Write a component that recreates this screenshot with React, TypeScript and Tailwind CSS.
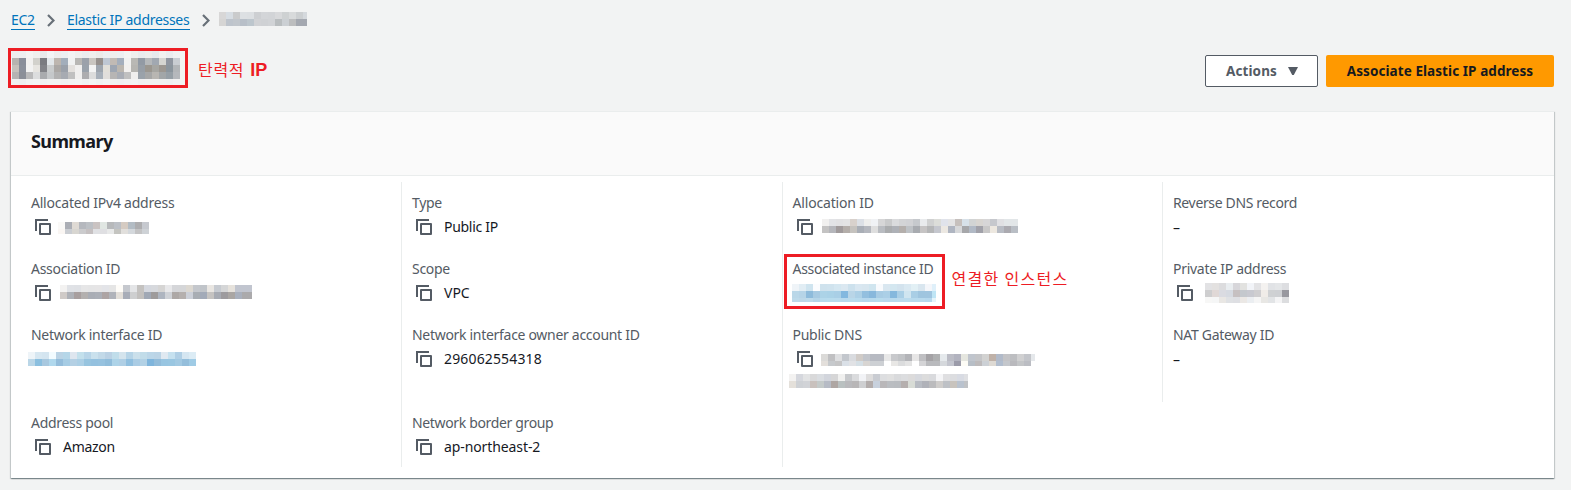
import type { ReactNode } from "react";

const FONT = "font-['Noto_Sans','Noto_Sans_CJK_KR',sans-serif]";

type MosaicProps = { rows: string[]; className?: string };

/* Redacted value: rows of 7px tiles, one hex colour per tile. */
function Mosaic({ rows, className = "" }: MosaicProps) {
  return (
    <span className={`flex flex-col overflow-hidden ${className}`}>
      {rows.map((row, y) => (
        <span key={y} className="flex h-[7px] shrink-0">
          {row.split(" ").map((c, x) => (
            <span key={x} className="h-[7px] w-[7px] shrink-0" style={{ backgroundColor: `#${c}` }} />
          ))}
        </span>
      ))}
    </span>
  );
}

function CopyIcon() {
  return (
    <svg className="ml-1 h-4 w-4 shrink-0" viewBox="0 0 16 16" fill="none" stroke="#545b64" strokeWidth="2">
      <path d="M1 12V1H13" />
      <rect x="5" y="5" width="10" height="10" strokeLinejoin="round" />
    </svg>
  );
}

function Chevron() {
  return (
    <svg className="h-[13px] w-2 shrink-0" viewBox="0 0 8 13" fill="none" stroke="#687078" strokeWidth="2.2">
      <path d="M1 1l5.5 5.5L1 12" />
    </svg>
  );
}

type FieldProps = { label: string; track: string; copy?: boolean; tall?: boolean; children: ReactNode };

function Field({ label, track, copy, tall, children }: FieldProps) {
  return (
    <div className={`relative flex shrink-0 flex-col ${tall ? "h-[88px]" : "h-[66px]"}`}>
      <div className={`h-[22px] whitespace-nowrap leading-[22px] text-[#545b64] ${track}`}>{label}</div>
      <div className="mt-0.5 flex h-[22px] items-center whitespace-nowrap leading-[22px] text-[#16191f]">
        {copy && <CopyIcon />}
        {children}
      </div>
    </div>
  );
}

const TITLE = [
  "eeeeee eeeff0 f4f4f3 f0f0ee e9eaeb f3f4f5 eeeded edeff1 f3f3f3 efefee ebecee efeeed ebeae9 eceef1 efeeed edeff1 f4f4f3 efefee e9ebed ededec e7eaed f1f1ef eaecee f1f1f1",
  "b7b3af 898e9a f2f1f0 d2d1cc 7a7b80 e2e7ea bdb6af a3aebb f1f2f2 b8b7b4 9ba1aa c9c5c0 96908d bfc7d3 c1bab4 a4aebc f1f1f0 b9b8b4 929aa4 b5b8ba a1a8b1 d5d5d1 9096a0 c9cdd2",
  "c6c1bb 8b909b f2f2f2 e7e5e1 828388 c9cccd aba8a5 9ba1aa e3e0dd f0efee 9aa2ab f3f3f3 9ea5ae e2dfd9 9ea6b2 bbb6af f2f0ee b6b5b1 979ea6 9b9790 a6a6a2 9c9791 8b959d b2b5b8",
  "b6b3b2 8b8f98 bababb dcddde a9abae c5c8ca b2b2b2 a7abb2 c0c0c0 f0efee adadaf dcdcdc a8b0ba e1dedb b7b5b4 a9adb5 c0c0c0 f0efee 9aa2aa a6a7a7 b8b6b2 a2a6a8 969fa6 b5b8bc",
  "f0f0f0 eeeeef f2f2f2 f3f3f3 f0f0f1 f2f2f2 f2f2f2 f0f1f1 f2f2f2 f3f3f3 f0f0f1 f3f3f3 f0f1f1 f3f3f3 f1f1f1 f0f0f1 f2f2f2 f3f3f3 f0f0f1 f1f1f1 f1f1f1 f0f1f1 eff0f1 f2f2f2",
];
const CRUMB = [
  "d8d7d7 d7dde3 cacbcc dde0e3 dcdfe2 cdcfd2 d3d5d8 d2d4d7 d8d9db ced1d2 d8dadb cccfd1 d5d9dd",
  "d6d5d4 bec4cc c1c6cc b8bfc8 bdc6cd d1d2d5 cfd1d4 d1d3d6 b9bdbf cbcfd3 bcbdbe a4a8b0 a4a8b0",
];
const IPV4 = [
  "faf9f7 abaeb5 dfdad4 b5b8be bcc0c5 cac3c2 e0e6e2 b7b9bb bcc0c6 d5cbc2 b3bcc4 adadaf c6c9cf",
  "faf6f3 cacdd2 d8d6d1 cbcbcd c5c0c1 e0e1e4 dfdfe2 e8e9e9 c4c4c0 e1dfdc d4d8dc c3c3c4 ced2d6",
];
const ASSOCIATION = [
  "f3f2f1 e0e2e6 dfe1e5 e6e6e7 e5e5e6 e6e5e6 e3e4e8 e5e5e5 fefcf8 c5c8ce e4e5e7 c4c2c0 d5d8df d7d9dd d6d5d4 e8e8ea d5d6d9 d5d6d8 dcd8d1 c4c7cc c0c4c9 e9e6e2 c7cbd1 d5d6d7 e6e2dc c1c5cf c1c5cf c1c5cf",
  "cfcac7 aeb1b7 a89f9f b3b0af a9adb5 abafb7 ada4a4 b0b3ba e3dfd9 a8adb8 cecfd0 c2c0be a0a8b5 9e9b9b aeb5c0 cfd2d7 ada8a6 b5b0ae ccd0d8 a8adb3 a2aab8 c5c3c1 a7abb3 9d9b9e aaa6a3 a9b0bd abaaac abaaac",
];
const INTERFACE = [
  "eef4f8 d7e7f1 d4e5f0 f2fbff bad3e5 b5d6e8 dee6ef c3e0ec b8d5e8 cae1ed c2d9e8 bad1e4 c0ddea d4e4ed b6d4e7 cbe0eb c1dce9 bbd6e8 bbd4e6 e0e9f1 c6e1ef b0cfe5 d5e6f1 dcecf5",
  "bad6e7 8bbfdf a8c8df b0d8ed 94bddb a6cce4 b4d0e4 accfe5 97c4df 94c1df 96c2df 90bddb add3e8 afcfe5 90bfdf aacce4 b2d1e5 7fb5dc 92bcda 98c5e1 99c6e1 a2c9e2 94bedb 9fcbe5",
];
const ALLOCATION = [
  "f1f0ef e2e3e6 e1e1e3 e3e3e4 d8d1cc dce0e6 eeeeed f0f2f5 d6d6d7 c9cacb dadbdd d3d4d6 d1d2d5 c6c9cd e9ebed d0d1d1 dcddd9 e0e3eb e4e4e5 c6c0bd d7e1e9 d2d4d4 d8d5d1 d7d6d7 c6c8cd e0e0e3 e2e6e8 e2e6e8",
  "c4c3c3 b5b6bb a09a9b b4aeaa c5c2be a9aeb6 b5b8bf dedede b9bcc1 aaacae aeb1b7 b4afac bec2c6 a8abb0 c6c4c4 b5b6b7 c5c7ce ece8e2 afb5c1 d7d8da a6a7aa b1b9c5 a1a1a9 c9c8c8 ede8e0 b8bcc4 abaab0 b9bec5",
];
const INSTANCE = [
  "eff4f8 e1edf4 cfe4ef fbfcfe cfe2ed d0e3ee d5e7f1 dbe8f1 cde1ed d9e7f1 d8e6ef d0e5ef f8fafd d9e7f0 d4e7f0 d3e3ee dae9f2 e2f0f5 d9e6ef f4f6fa dff0fa",
  "bad7e8 b6d4e7 8ebbdb a7cae2 acd3e7 aad2e7 a9cfe6 83b8df b9d5e7 add0e6 93bfdf 88b8dc a8cce4 abcfe6 85b8dd aacfe6 d0e5f0 a9cee5 9fc5df a0c5df bfe5f5",
  "bddaea bdd8e8 bddaea b5d5e8 b7dbed b8dced b9dbed b8d9ed b9dbed b7daed b6d7ed b7daed b8dced b9d8ed b8daed bbdaed bbdbed b8daed b9daed b6d8ed e5f4fa",
];
const DNS_ONE = [
  "dbdad8 c0c0c2 dedfe1 c3c7cd d9dbdf d0cbc7 c2c5cb b7bac2 b7bac2 e8e8e8 c8c9cc c1c3c6 b3b4b8 e7e6e6 bfbfc2 a4a2a5 afb0b1 e5e9ec bbbcc5 b2b3bf e5e6df c0c5cd c4c5c8 d2d2d1 bfb1a8 b1bac9 c3c3c6 bdbec1 d0d0d1 c3c5ca e5e8eb",
  "e3dfdb c6c9cc c5c5c6 dae0e7 e1e2e5 d5dfe5 d8d5d2 cdd0d4 cdd0d4 ffffff e8e7e5 dbdcdd e4e4e4 ffffff d4d4d6 b9babd b9babd d5d8dc c3c5ce 9b9ba9 fdfcf6 b7bec6 bdbabb ccd0d5 ddd9d3 b1bdce c4c7cc b9b9bd c3c5c7 bbbdc3 ffffff",
];
const DNS_TWO = [
  "f3f2f1 d5d7dd e2e3e4 d9d9da dadde1 d2d5dc d6d6d7 f0f0ef c7c9cc dadbdd f2f3f6 dedddd c9ccd2 dddee0 e0e0e0 d9dadc dcdddf dcdbdb d7d9de dcdcdc d9dadd f5f5f7 dfdfe1 dcdde0 d8dbe3 dfe0e3",
  "e4e0da ced1d5 d1d3d7 c9c1bd c4cac9 b6bbc5 aea6a3 b9c0c0 b9b9bc b8b6b7 cecfd1 b3adac c8d1dd b9b7b9 babdc1 b9bcc0 b5afae d8dcd6 b8bcc3 b0b2b9 bbbbbd cfcdcb bec1c6 c8c3bd b9c2ce c0c2c5",
];
const PRIVATE_IP = [
  "e2e2e4 e3e1e0 dcdcde e9edf0 d7d6da e2e2e0 f2f4f8 e3e3e5 f4f2f0 e1e3e6 e4e6e8 dddee1",
  "cececf e0d8d6 dadbe1 d6dae1 c6c0c1 c4c8cd c8c9d0 cfced0 f0ece8 cfd1d3 ced0d3 98989f",
  "f7f7f6 f5f6f6 e9e7e4 dfe1e4 dedfe3 ebe8e5 ebeef1 f5f5f5 e8e7e4 e2e4e6 f4f4f5 dcdddf",
];

export default function App() {
  return (
    <div className={`h-[490px] w-[1571px] overflow-hidden bg-[#f2f3f3] text-[14px] ${FONT}`}>
      <nav className="flex h-[40px] items-center pl-[11px]">
        <a className="flex h-5 w-6 items-center whitespace-nowrap border-b border-[#0073bb] tracking-[-0.3px] text-[#0073bb]">EC2</a>
        <span className="ml-3 flex w-2"><Chevron /></span>
        <a className="ml-3 flex h-5 w-[123px] items-center whitespace-nowrap border-b border-[#0073bb] tracking-[-0.3px] text-[#0073bb]">Elastic IP addresses</a>
        <span className="ml-3 flex"><Chevron /></span>
        <Mosaic rows={CRUMB} className="-mt-0.5 ml-[9px] w-[88px]" />
      </nav>

      <header className="flex h-[71px] items-start justify-between pl-2 pr-[17px] pt-2">
        <div className="flex items-center">
          <div className="flex h-[40px] w-[180px] items-start border-[3px] border-[#ed1c24] pl-px">
            <Mosaic rows={TITLE} className="h-[34px] w-[168px]" />
          </div>
          <h1 className="ml-[10px] mt-[2px] flex items-center whitespace-nowrap font-['Noto_Sans_CJK_KR',sans-serif] text-[16px] leading-6 tracking-[0.7px] text-[#ed1c24]">
            탄력적<span className="ml-[6px] mt-px font-['Liberation_Sans',sans-serif] text-[18px] font-bold tracking-normal">IP</span>
          </h1>
        </div>
        <div className="mt-[7px] flex gap-2 font-bold">
          <button className="flex h-8 w-[113px] items-center rounded-[2px] border border-[#545b64] bg-white pl-5 text-[#545b64]">
            <span className="w-[62px] text-left text-[13.5px] tracking-[0.1px]">Actions</span>
            <svg className="h-2 w-2.5" viewBox="0 0 10 8" fill="#545b64"><path d="M0 0H10L5.8 8H4.2Z" /></svg>
          </button>
          <button className="flex h-8 w-[228px] items-center justify-center whitespace-nowrap rounded-[2px] bg-[#ff9900] text-[13.5px] tracking-[0.07px] text-[#16191f]">
            Associate Elastic IP address
          </button>
        </div>
      </header>

      <main className="ml-[11px] h-[367px] w-[1543px] border-t border-[#eaeded] bg-white shadow-[0_1px_1px_0_rgba(0,28,36,0.3),1px_1px_1px_0_rgba(0,28,36,0.15),-1px_1px_1px_0_rgba(0,28,36,0.15)]">
        <div className="flex h-[64px] items-center border-b border-[#eaeded] bg-[#fafafa] pb-[5px] pl-5">
          <h2 className="text-[18px] font-bold leading-[22px] tracking-[-0.6px] text-[#16191f]">Summary</h2>
        </div>

        <section className="grid grid-cols-[390px_381px_380px_1fr] items-start pt-1.5">
          <div className="flex h-[285px] flex-col pl-5 pt-2.5">
            <Field label="Allocated IPv4 address" track="tracking-[-0.22px]" copy>
              <Mosaic rows={IPV4} className="ml-[7px] mt-0.5 h-3 w-[91px]" />
            </Field>
            <Field label="Association ID" track="tracking-[-0.3px]" copy>
              <Mosaic rows={ASSOCIATION} className="-mt-0.5 ml-[9px] w-[192px]" />
            </Field>
            <Field label="Network interface ID" track="tracking-[-0.28px]" tall>
              <Mosaic rows={INTERFACE} className="-ml-[3px]" />
            </Field>
            <Field label="Address pool" track="tracking-[-0.3px]" copy>
              <span className="ml-3 tracking-[-0.3px]">Amazon</span>
            </Field>
          </div>

          <div className="flex h-[285px] flex-col border-l border-[#eaeded] pl-2.5 pt-2.5">
            <Field label="Type" track="tracking-[-0.3px]" copy>
              <span className="ml-3 tracking-[-0.3px]">Public IP</span>
            </Field>
            <Field label="Scope" track="tracking-[-0.3px]" copy>
              <span className="ml-3 tracking-normal">VPC</span>
            </Field>
            <Field label="Network interface owner account ID" track="tracking-[-0.3px]" copy tall>
              <span className="ml-3 tracking-[0.15px]">296062554318</span>
            </Field>
            <Field label="Network border group" track="tracking-[-0.35px]" copy>
              <span className="ml-3 tracking-[-0.1px]">ap-northeast-2</span>
            </Field>
          </div>

          <div className="flex h-[285px] flex-col border-l border-[#eaeded] pl-[9.5px] pt-2.5">
            <Field label="Allocation ID" track="tracking-[-0.18px]" copy>
              <Mosaic rows={ALLOCATION} className="-mt-0.5 ml-[9px] w-[196px]" />
            </Field>
            <Field label="Associated instance ID" track="tracking-[-0.32px]">
              <Mosaic rows={INSTANCE} className="-ml-[0.5px] h-[18px] w-[144px]" />
              <span className="absolute -left-[8.5px] -top-1 h-[55px] w-[161px] border-[3px] border-[#ed1c24]" />
              <span className="absolute left-[159px] top-[9px] font-['Noto_Sans_CJK_KR',sans-serif] text-[16px] tracking-[1.3px] text-[#ed1c24]">연결한 인스턴스</span>
            </Field>
            <Field label="Public DNS" track="tracking-[-0.25px]" copy tall>
              <Mosaic rows={DNS_ONE} className="ml-2 mt-0.5 h-3 w-[214px]" />
              <Mosaic rows={DNS_TWO} className="absolute -left-[3.5px] top-[50px] w-[179px]" />
            </Field>
          </div>

          <div className="flex h-[220px] flex-col border-l border-[#eaeded] pl-2.5 pt-2.5">
            <Field label="Reverse DNS record" track="tracking-[-0.35px]">
              <span className="pt-0.5">–</span>
            </Field>
            <Field label="Private IP address" track="tracking-[-0.28px]" copy>
              <Mosaic rows={PRIVATE_IP} className="ml-3 h-[20px] w-[84px]" />
            </Field>
            <Field label="NAT Gateway ID" track="tracking-[-0.3px]">
              <span className="pt-0.5">–</span>
            </Field>
          </div>
        </section>
      </main>
    </div>
  );
}
